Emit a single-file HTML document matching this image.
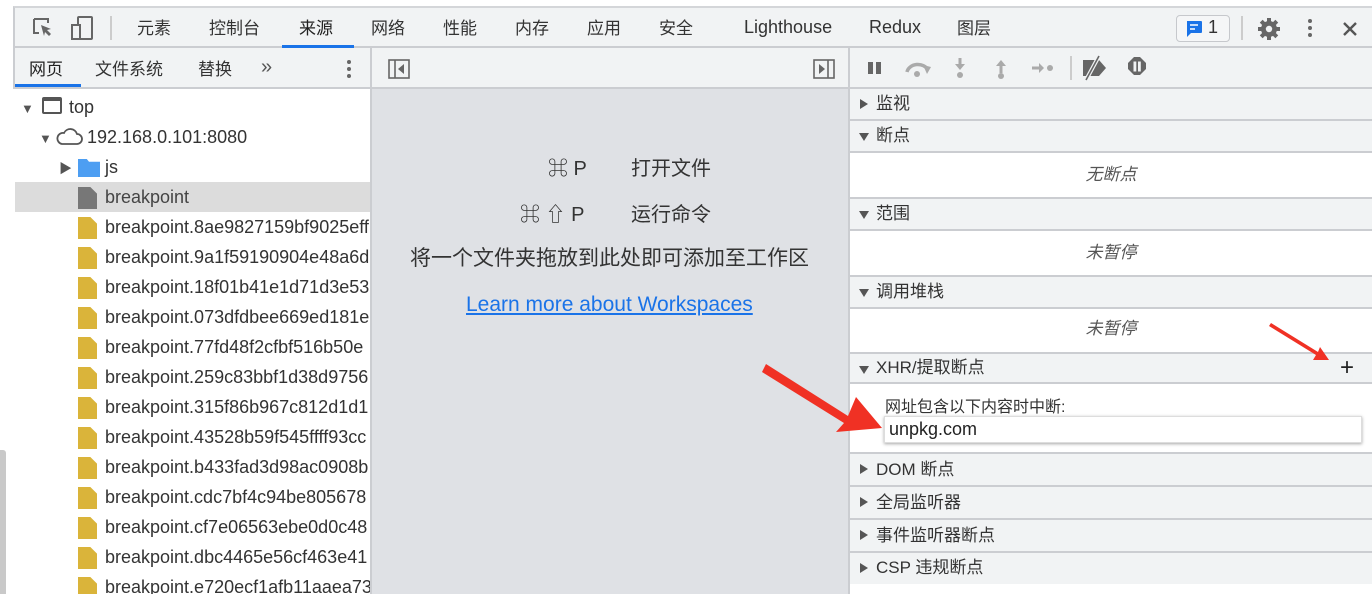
<!DOCTYPE html>
<html><head><meta charset="utf-8"><style>
*{box-sizing:border-box;margin:0;padding:0}
body{width:1372px;height:594px;overflow:hidden;background:#fff;font-family:"Liberation Sans","Noto Sans CJK SC",sans-serif;font-size:17px;color:#333;position:relative}
.abs{position:absolute}
.tabs{left:13px;top:6px;width:1359px;height:42px;background:#f1f3f4;border-top:2px solid #d4d6d9;border-bottom:2px solid #cbcdd1;border-left:2px solid #cbcdd1}
.tab{position:absolute;top:9px;line-height:24px;font-size:17px;color:#333;white-space:nowrap}
.lat{font-size:18px;top:7px}
.row2{top:48px;height:41px;background:#f1f3f4;border-bottom:2px solid #cbcdd1}
.tree{left:15px;top:89px;width:355px;height:505px;background:#fff;overflow:hidden}
.tr{position:absolute;height:30px;line-height:30px;white-space:nowrap;font-size:18px;color:#333}
.fi{position:absolute;top:5px;width:19px;height:22px;background:#dab43a;clip-path:polygon(0 0,65% 0,100% 30%,100% 100%,0 100%)}
.sec{position:absolute;left:850px;width:522px;background:#f1f3f4;border-bottom:2px solid #cbcdd1;font-size:17px;line-height:30px;padding-left:26px}
.sec:before{content:"";position:absolute;left:10px;top:10px;border-left:8px solid #555;border-top:5px solid transparent;border-bottom:5px solid transparent}
.sec.o:before{left:9px;top:12px;border-top:8px solid #555;border-left:5px solid transparent;border-right:5px solid transparent;border-bottom:0}
.emp{position:absolute;left:850px;width:522px;text-align:center;font-style:italic;color:#555;background:#fff;border-bottom:2px solid #cbcdd1}
</style></head><body>
<div class="abs" style="left:0;top:450px;width:6px;height:144px;background:#c9c9c9;border-radius:0 3px 0 0"></div>
<div class="abs tabs">
 <svg class="abs" style="left:16px;top:8px" width="24" height="24" viewBox="0 0 24 24"><path d="M3 3h14v4M3 3v14h5" stroke="#666" stroke-width="2" fill="none"/><path d="M10 9l10 4-4 1 4 4-2 2-4-4-1 4z" fill="#666"/></svg>
 <svg class="abs" style="left:55px;top:8px" width="24" height="26" viewBox="0 0 24 26"><rect x="8" y="1" width="14" height="22" rx="1" stroke="#666" stroke-width="2" fill="none"/><rect x="2" y="9" width="8" height="14" stroke="#666" stroke-width="2" fill="#f1f3f4"/></svg>
 <div class="abs" style="left:95px;top:8px;width:2px;height:24px;background:#ccc"></div>
 <span class="tab" style="left:122px">元素</span><span class="tab" style="left:194px">控制台</span><span class="tab" style="left:284px;color:#222">来源</span>
 <div class="abs" style="left:267px;top:37px;width:72px;height:3px;background:#1a73e8"></div>
 <span class="tab" style="left:356px">网络</span><span class="tab" style="left:428px">性能</span><span class="tab" style="left:500px">内存</span><span class="tab" style="left:572px">应用</span><span class="tab" style="left:644px">安全</span><span class="tab lat" style="left:729px">Lighthouse</span><span class="tab lat" style="left:854px">Redux</span><span class="tab" style="left:942px">图层</span>
 <div class="abs" style="left:1161px;top:7px;width:54px;height:27px;border:1.5px solid #c6c8cc;border-radius:4px;background:#f5f6f7"></div>
 <svg class="abs" style="left:1170px;top:12px" width="18" height="18" viewBox="0 0 18 18"><path d="M2 1h14a1 1 0 0 1 1 1v10a1 1 0 0 1-1 1H6l-4 4z" fill="#1a73e8"/><path d="M5 5h8M5 9h5" stroke="#fff" stroke-width="1.6"/></svg>
 <span class="tab lat" style="left:1193px">1</span>
 <div class="abs" style="left:1226px;top:8px;width:2px;height:24px;background:#ccc"></div>
 <svg class="abs" style="left:1242px;top:9px" width="24" height="24" viewBox="0 0 24 24"><g fill="#666"><circle cx="12" cy="12" r="8"/><g stroke="#666" stroke-width="4"><path d="M12 1v22M1 12h22M4.2 4.2l15.6 15.6M19.8 4.2L4.2 19.8"/></g></g><circle cx="12" cy="12" r="3.2" fill="#f1f3f4"/></svg>
 <div class="abs" style="left:1293px;top:11px;width:4px;height:4px;border-radius:2px;background:#666;box-shadow:0 7px #666,0 14px #666"></div>
 <svg class="abs" style="left:1326px;top:12px" width="18" height="18"><path d="M3 3l12 12M15 3L3 15" stroke="#555" stroke-width="2.4"/></svg>
</div>
<div class="abs row2" style="left:13px;width:358px;border-left:2px solid #cbcdd1">
 <span class="tab" style="left:14px;top:10px;color:#222">网页</span>
 <div class="abs" style="left:0;top:36px;width:66px;height:3px;background:#1a73e8"></div>
 <span class="tab" style="left:80px;top:10px">文件系统</span><span class="tab" style="left:183px;top:10px">替换</span><span class="tab" style="left:246px;top:7px;font-size:20px;color:#555">»</span>
 <div class="abs" style="left:332px;top:12px;width:4px;height:4px;border-radius:2px;background:#666;box-shadow:0 7px #666,0 14px #666"></div>
</div>
<div class="abs" style="left:370px;top:48px;width:2px;height:546px;background:#cbcdd1"></div>
<div class="abs row2" style="left:372px;width:476px">
 <svg class="abs" style="left:16px;top:11px" width="22" height="20"><rect x="1" y="1" width="20" height="18" stroke="#666" stroke-width="1.6" fill="none"/><path d="M7 1v18" stroke="#666" stroke-width="1.6"/><path d="M16 5v10l-6-5z" fill="#666"/></svg>
 <svg class="abs" style="left:441px;top:11px" width="22" height="20"><rect x="1" y="1" width="20" height="18" stroke="#666" stroke-width="1.6" fill="none"/><path d="M15 1v18" stroke="#666" stroke-width="1.6"/><path d="M6 5v10l6-5z" fill="#666"/></svg>
</div>
<div class="abs" style="left:372px;top:89px;width:476px;height:505px;background:#dfe1e5"></div>
<div class="abs" style="left:848px;top:48px;width:2px;height:546px;background:#cbcdd1"></div>
<div class="abs" style="left:372px;top:156px;width:476px;font-size:20px;line-height:26px;color:#333">
 <span class="abs" style="left:176px;white-space:nowrap">⌘ P</span><span class="abs" style="left:259px;white-space:nowrap">打开文件</span>
</div>
<div class="abs" style="left:372px;top:202px;width:476px;font-size:20px;line-height:26px;color:#333">
 <span class="abs" style="left:148px;white-space:nowrap">⌘ ⇧ P</span><span class="abs" style="left:259px;white-space:nowrap">运行命令</span>
</div>
<div class="abs" style="left:410px;top:246px;font-size:21px;line-height:26px;white-space:nowrap;color:#333">将一个文件夹拖放到此处即可添加至工作区</div>
<div class="abs" style="left:466px;top:292px;font-size:21px;line-height:26px;white-space:nowrap;color:#1a73e8;text-decoration:underline">Learn more about Workspaces</div>
<div class="tree abs">
 <div class="abs" style="left:0;top:93px;width:355px;height:30px;background:#dcdcdc"></div>
 <div class="tr" style="left:6px;top:3px"><span style="font-size:13px;color:#555">▼</span></div>
 <div class="abs" style="left:27px;top:8px;width:20px;height:17px;border:2px solid #555;border-top-width:4px;border-radius:2px"></div>
 <div class="tr" style="left:54px;top:3px">top</div>
 <div class="tr" style="left:24px;top:33px"><span style="font-size:13px;color:#555">▼</span></div>
 <svg class="abs" style="left:40px;top:39px" width="28" height="18"><path d="M7 16h15a5 5 0 0 0 0-10 7 7 0 0 0-13-1A5.5 5.5 0 0 0 7 16z" fill="none" stroke="#555" stroke-width="1.8"/></svg>
 <div class="tr" style="left:72px;top:33px">192.168.0.101:8080</div>
 <div class="tr" style="left:44px;top:63px"><span style="font-size:13px;color:#555">▶</span></div>
 <div class="abs" style="left:63px;top:70px;width:22px;height:18px;background:#4d9ef2;clip-path:polygon(0 0,40% 0,50% 15%,100% 15%,100% 100%,0 100%)"></div>
 <div class="tr" style="left:90px;top:63px">js</div>
 <div class="fi" style="left:63px;top:98px;background:#777"></div>
 <div class="tr" style="left:90px;top:93px;color:#444">breakpoint</div>
 <div class="fi" style="left:63px;top:128px"></div><div class="tr" style="left:90px;top:123px">breakpoint.8ae9827159bf9025eff</div>
 <div class="fi" style="left:63px;top:158px"></div><div class="tr" style="left:90px;top:153px">breakpoint.9a1f59190904e48a6d</div>
 <div class="fi" style="left:63px;top:188px"></div><div class="tr" style="left:90px;top:183px">breakpoint.18f01b41e1d71d3e53</div>
 <div class="fi" style="left:63px;top:218px"></div><div class="tr" style="left:90px;top:213px">breakpoint.073dfdbee669ed181e</div>
 <div class="fi" style="left:63px;top:248px"></div><div class="tr" style="left:90px;top:243px">breakpoint.77fd48f2cfbf516b50e</div>
 <div class="fi" style="left:63px;top:278px"></div><div class="tr" style="left:90px;top:273px">breakpoint.259c83bbf1d38d9756</div>
 <div class="fi" style="left:63px;top:308px"></div><div class="tr" style="left:90px;top:303px">breakpoint.315f86b967c812d1d1</div>
 <div class="fi" style="left:63px;top:338px"></div><div class="tr" style="left:90px;top:333px">breakpoint.43528b59f545ffff93cc</div>
 <div class="fi" style="left:63px;top:368px"></div><div class="tr" style="left:90px;top:363px">breakpoint.b433fad3d98ac0908b</div>
 <div class="fi" style="left:63px;top:398px"></div><div class="tr" style="left:90px;top:393px">breakpoint.cdc7bf4c94be805678</div>
 <div class="fi" style="left:63px;top:428px"></div><div class="tr" style="left:90px;top:423px">breakpoint.cf7e06563ebe0d0c48</div>
 <div class="fi" style="left:63px;top:458px"></div><div class="tr" style="left:90px;top:453px">breakpoint.dbc4465e56cf463e41</div>
 <div class="fi" style="left:63px;top:488px"></div><div class="tr" style="left:90px;top:483px">breakpoint.e720ecf1afb11aaea73</div>
</div>
<div class="abs row2" style="left:850px;width:522px">
 <svg class="abs" style="left:0;top:0" width="300" height="40"><g fill="#666"><rect x="18" y="14" width="5" height="12"/><rect x="26" y="14" width="5" height="12"/></g>
 <g fill="#aaa" stroke="#aaa"><path d="M57 24a11 9 0 0 1 21-2" fill="none" stroke-width="3.5"/><path d="M73 17l8 2-4 7z" stroke="none"/><circle cx="67" cy="26" r="3" stroke="none"/>
 <path d="M110 10v9" stroke-width="3"/><path d="M105 16h10l-5 6z" stroke="none"/><circle cx="110" cy="27" r="3" stroke="none"/>
 <path d="M151 17v8" stroke-width="3"/><path d="M146 18h10l-5-6z" stroke="none"/><circle cx="151" cy="28" r="3" stroke="none"/>
 <path d="M182 20h8" stroke-width="3"/><path d="M189 15v10l5-5z" stroke="none"/><circle cx="200" cy="20" r="3" stroke="none"/></g>
 <rect x="220" y="8" width="2" height="24" fill="#ccc"/>
 <path d="M233 12h16l7 8-7 8h-16z" fill="#666"/><path d="M236 32l13-24" stroke="#f1f3f4" stroke-width="4"/><path d="M236 32l13-24" stroke="#666" stroke-width="1.6"/>
 <path d="M284 9h6l6 6v6l-6 6h-6l-6-6v-6z" fill="#666"/><rect x="283.5" y="13.5" width="2.8" height="10" fill="#f1f3f4"/><rect x="288" y="13.5" width="2.8" height="10" fill="#f1f3f4"/></svg>
</div>
<div class="sec" style="top:89px;height:32px">监视</div>
<div class="sec o" style="top:121px;height:32px">断点</div>
<div class="emp" style="top:153px;height:46px;line-height:44px">无断点</div>
<div class="sec o" style="top:199px;height:32px">范围</div>
<div class="emp" style="top:231px;height:46px;line-height:44px">未暂停</div>
<div class="sec o" style="top:277px;height:32px">调用堆栈</div>
<div class="emp" style="top:309px;height:45px;line-height:40px">未暂停</div>
<div class="sec o" style="top:354px;height:30px;line-height:28px">XHR/提取断点<span class="abs" style="left:490px;top:0;font-size:24px;color:#222">+</span></div>
<div class="abs" style="left:850px;top:384px;width:522px;height:70px;background:#fff;border-bottom:2px solid #cbcdd1">
 <div class="abs" style="left:35px;top:9px;font-size:16px">网址包含以下内容时中断:</div>
 <div class="abs" style="left:34px;top:32px;width:478px;height:27px;border:1px solid #ddd;box-shadow:0 1px 3px rgba(0,0,0,.35);font-size:18px;line-height:24px;padding-left:4px;color:#222">unpkg.com</div>
</div>
<div class="sec" style="top:454px;height:33px;line-height:31px">DOM 断点</div>
<div class="sec" style="top:487px;height:33px;line-height:31px">全局监听器</div>
<div class="sec" style="top:520px;height:33px;line-height:31px">事件监听器断点</div>
<div class="sec" style="top:553px;height:31px;line-height:30px;border-bottom:0">CSP 违规断点</div>
<svg class="abs" style="left:0;top:0" width="1372" height="594"><g fill="#f03124">
<path d="M762 372 L766 364 L848 416 L856 397 L882 428 L836 432 L844 423 Z"/>
<path d="M1269 326 L1271 323 L1318 352 L1320 347 L1329 360 L1313 360 L1316 355 Z"/></g></svg>
</body></html>
